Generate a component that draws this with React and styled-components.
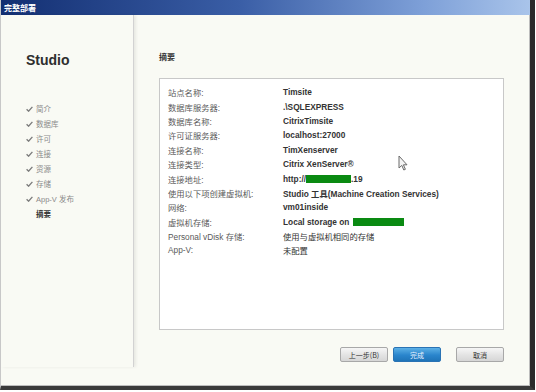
import styled, { createGlobalStyle } from "styled-components";

const GlobalStyle = createGlobalStyle`
  html, body {
    margin: 0;
    padding: 0;
    background: #ffffff;
  }
  body {
    font-family: "Liberation Sans", "Noto Sans CJK SC", sans-serif;
  }
`;

const Frame = styled.div`
  width: 529px;
  height: 386px;
  display: flex;
  flex-direction: column;
  background: #f9faf4;
  border-left: 1px solid #c8c8c8;
  border-right: 5px solid #2b2b2b;
  border-bottom: 4px solid #3a3a3a;
  box-shadow: inset -1px 0 0 #bdbdbd, inset 0 -1px 0 #bdbdbd;
  position: relative;
`;

const TitleBar = styled.div`
  height: 15px;
  flex: none;
  display: flex;
  align-items: center;
  padding-left: 3px;
  background: linear-gradient(90deg, #132f72 0%, #3a5ea6 45%, #7ea0d8 80%, #a9c4ea 100%);
  color: #ffffff;
  font-size: 8px;
  font-weight: bold;
  font-family: "Noto Sans CJK SC", sans-serif;
`;

const Main = styled.div`
  flex: 1;
  display: flex;
  min-height: 0;
`;

const Sidebar = styled.div`
  width: 133px;
  flex: none;
  padding: 37px 0 0 25px;
  box-sizing: border-box;
  margin-bottom: 19px;
  border-right: 1px solid #d2d2d2;
  box-shadow: 2px 0 3px rgba(0, 0, 0, 0.07);
`;

const Brand = styled.div`
  font-size: 14px;
  font-weight: bold;
  color: #2e2e2e;
  line-height: 16px;
  margin-bottom: 33px;
`;

const StepList = styled.div`
  display: flex;
  flex-direction: column;
`;

const Step = styled.div`
  display: flex;
  align-items: center;
  height: 15px;
  font-size: 7.5px;
  color: ${(p) => (p.$current ? "#333333" : "#8a8a8a")};
  font-weight: ${(p) => (p.$current ? "bold" : "normal")};
  font-family: "Liberation Sans", "Noto Sans CJK SC", sans-serif;
`;

const CheckSlot = styled.span`
  width: 10px;
  display: inline-flex;
  align-items: center;
`;

const Content = styled.div`
  flex: 1;
  padding: 37px 26px 0 25px;
  display: flex;
  flex-direction: column;
`;

const Heading = styled.div`
  font-size: 8px;
  font-weight: bold;
  color: #333333;
  line-height: 10px;
  font-family: "Noto Sans CJK SC", sans-serif;
`;

const SummaryBox = styled.div`
  margin-top: 16px;
  height: 252px;
  box-sizing: border-box;
  background: #ffffff;
  border: 1px solid #c8c8c8;
  padding: 6px 8px 0 8px;
`;

const Row = styled.div`
  display: flex;
  align-items: center;
  height: 14.4px;
  font-size: 8.3px;
`;

const Label = styled.div`
  width: 115px;
  flex: none;
  color: #5a5a5a;
  white-space: nowrap;
`;

const Value = styled.div`
  color: #333333;
  font-weight: ${(p) => (p.$plain ? "normal" : "bold")};
  white-space: nowrap;
  display: flex;
  align-items: center;
`;

const Redact = styled.span`
  display: inline-block;
  width: ${(p) => p.$w}px;
  height: 8px;
  background: #0a8a12;
  margin-left: ${(p) => p.$ml || 0}px;
`;

const ButtonRow = styled.div`
  margin-top: 17px;
  display: flex;
  justify-content: flex-end;
`;

const Button = styled.button`
  width: 48px;
  height: 15px;
  padding: 0;
  margin-left: ${(p) => p.$gap}px;
  font-size: 7px;
  font-family: "Noto Sans CJK SC", sans-serif;
  border-radius: 2px;
  border: 1px solid ${(p) => (p.$primary ? "#2a73b4" : "#a8a8a8")};
  color: ${(p) => (p.$primary ? "#e8f3ff" : "#333333")};
  background: ${(p) =>
    p.$primary
      ? "linear-gradient(#5cb0e6, #2a85cc 55%, #1f74b8)"
      : "linear-gradient(#f6f6f6, #e3e3e3 55%, #d6d6d6)"};
`;

const Cursor = styled.svg`
  position: absolute;
  left: 397px;
  top: 155px;
`;

const steps = ["简介", "数据库", "许可", "连接", "资源", "存储", "App-V 发布"];

const rows = [
  ["站点名称:", "Timsite"],
  ["数据库服务器:", ".\\SQLEXPRESS"],
  ["数据库名称:", "CitrixTimsite"],
  ["许可证服务器:", "localhost:27000"],
  ["连接名称:", "TimXenserver"],
  ["连接类型:", "Citrix XenServer®"],
  ["连接地址:", "url"],
  ["使用以下项创建虚拟机:", "Studio 工具(Machine Creation Services)"],
  ["网络:", "vm01inside"],
  ["虚拟机存储:", "storage"],
  ["Personal vDisk 存储:", "使用与虚拟机相同的存储", true],
  ["App-V:", "未配置", true],
];

function Check() {
  return (
    <svg width="7" height="6" viewBox="0 0 7 6">
      <path d="M0.6 3.2 L2.6 5.2 L6.4 0.8" fill="none" stroke="#7a7a7a" strokeWidth="1.3" />
    </svg>
  );
}

function renderValue(v) {
  if (v === "url") {
    return (
      <>
        http://
        <Redact $w={45} />
        .19
      </>
    );
  }
  if (v === "storage") {
    return (
      <>
        Local storage on
        <Redact $w={51} $ml={4} />
      </>
    );
  }
  return v;
}

export default function App() {
  return (
    <>
      <GlobalStyle />
      <Frame>
        <TitleBar>完整部署</TitleBar>
        <Main>
          <Sidebar>
            <Brand>Studio</Brand>
            <StepList>
              {steps.map((s) => (
                <Step key={s}>
                  <CheckSlot>
                    <Check />
                  </CheckSlot>
                  {s}
                </Step>
              ))}
              <Step $current>
                <CheckSlot />
                摘要
              </Step>
            </StepList>
          </Sidebar>
          <Content>
            <Heading>摘要</Heading>
            <SummaryBox>
              {rows.map(([label, value, plain]) => (
                <Row key={label}>
                  <Label>{label}</Label>
                  <Value $plain={plain}>{renderValue(value)}</Value>
                </Row>
              ))}
            </SummaryBox>
            <ButtonRow>
              <Button $gap={0}>上一步(B)</Button>
              <Button $gap={5} $primary>
                完成
              </Button>
              <Button $gap={15}>取消</Button>
            </ButtonRow>
          </Content>
        </Main>
        <Cursor width="10" height="16" viewBox="0 0 10 16">
          <path
            d="M1 1 L1 13 L3.8 10.4 L5.8 15 L7.4 14.3 L5.4 9.8 L9 9.8 Z"
            fill="#f4f4f4"
            stroke="#6a6a6a"
            strokeWidth="1"
            strokeLinejoin="round"
          />
        </Cursor>
      </Frame>
    </>
  );
}
